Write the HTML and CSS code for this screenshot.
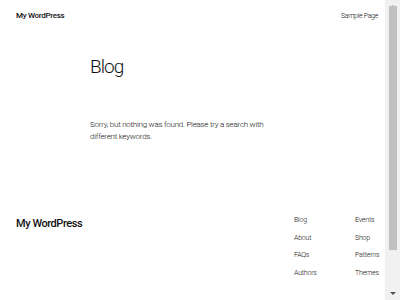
FILE: index.html
```html
<!DOCTYPE html>
<html lang="en">
<head>
<meta charset="utf-8">
<title>Blog – My WordPress</title>
<link rel="stylesheet" href="styles.css">
</head>
<body>
<header class="site-header">
  <a class="site-title" href="#">My WordPress</a>
  <nav class="top-nav"><a href="#">Sample Page</a></nav>
</header>
<main class="content">
  <h1 class="page-title">Blog</h1>
  <p class="notice">Sorry, but nothing was found. Please try a search with different keywords.</p>
</main>
<footer class="site-footer">
  <a class="footer-title" href="#">My WordPress</a>
  <nav class="footer-nav">
    <ul class="footer-col">
      <li><a href="#">Blog</a></li>
      <li><a href="#">About</a></li>
      <li><a href="#">FAQs</a></li>
      <li><a href="#">Authors</a></li>
    </ul>
    <ul class="footer-col">
      <li><a href="#">Events</a></li>
      <li><a href="#">Shop</a></li>
      <li><a href="#">Patterns</a></li>
      <li><a href="#">Themes</a></li>
    </ul>
  </nav>
</footer>
<div class="scrollbar" aria-hidden="true">
  <span class="sb-arrow sb-up"></span>
  <span class="sb-track"><span class="sb-thumb"></span></span>
  <span class="sb-arrow sb-down"></span>
</div>
</body>
</html>
```

FILE: styles.css
```css
html, body {
  margin: 0;
  padding: 0;
  background: #ffffff;
  color: #111111;
  font-family: Roboto, "Noto Sans", sans-serif;
}

body {
  padding-right: 15px;
}

a {
  color: inherit;
  text-decoration: none;
}

.site-header {
  display: flex;
  justify-content: space-between;
  align-items: center;
  padding: 5px 7px 0 16px;
  height: 21px;
}

.site-title {
  font-size: 8px;
  font-weight: 500;
  letter-spacing: -0.3px;
}

.top-nav {
  font-size: 7px;
  font-weight: 300;
  letter-spacing: -0.3px;
}

.content {
  padding: 29px 0 0 90px;
  width: 180px;
}

.page-title {
  margin: 0;
  font-size: 19px;
  font-weight: 300;
  letter-spacing: -0.9px;
  line-height: 24px;
}

.notice {
  margin: 40px 0 0;
  font-size: 8px;
  font-weight: 300;
  letter-spacing: -0.25px;
  line-height: 12px;
}

.site-footer {
  display: flex;
  justify-content: space-between;
  padding: 69px 7px 80px 16px;
}

.footer-title {
  font-size: 11px;
  font-weight: 500;
  letter-spacing: -0.45px;
  line-height: 16px;
  padding-top: 4px;
}

.footer-nav {
  display: flex;
}

.footer-col {
  list-style: none;
  margin: 0;
  padding: 0;
  width: 61px;
  font-size: 7px;
  font-weight: 300;
  letter-spacing: -0.2px;
  line-height: 17.5px;
}

.footer-col + .footer-col {
  width: 23px;
}

.scrollbar {
  position: fixed;
  top: 0;
  right: 0;
  width: 15px;
  height: 300px;
  background: #f1f1f1;
  display: flex;
  flex-direction: column;
  align-items: center;
}

.sb-arrow {
  width: 0;
  height: 0;
  border-left: 3px solid transparent;
  border-right: 3px solid transparent;
  margin: 5px 0;
}

.sb-up {
  border-bottom: 3px solid #a3a3a3;
}

.sb-down {
  border-top: 3px solid #505050;
}

.sb-track {
  flex: 1;
  width: 100%;
  display: flex;
  justify-content: center;
}

.sb-thumb {
  width: 8px;
  height: 244px;
  margin-top: -7px;
  background: #c1c1c1;
}
```
